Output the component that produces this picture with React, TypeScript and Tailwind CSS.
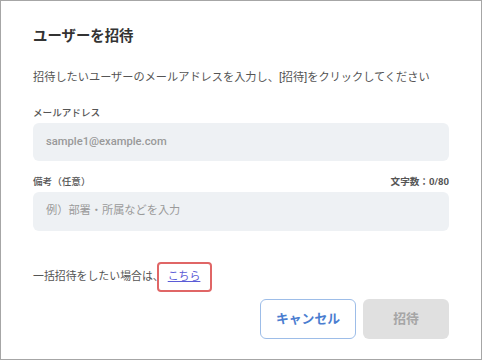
const font = {
  fontFamily: 'Roboto, "Noto Sans CJK JP", sans-serif',
};

export default function App() {
  return (
    <div
      className="w-[482px] h-[360px] border border-[#a6a6a6] bg-white px-8 pt-[25px] flex flex-col text-[#444]"
      style={font}
    >
      <h2 className="text-[14.4px] font-bold leading-[22px] text-[#333]">ユーザーを招待</h2>

      <p className="mt-[21px] text-[11.2px] leading-[17px] text-[#555]">
        招待したいユーザーのメールアドレスを入力し、[招待]をクリックしてください
      </p>

      {/* Email */}
      <label className="mt-[20px] text-[9.6px] leading-[14px] font-medium text-[#555]">メールアドレス</label>
      <div className="mt-[3px] h-[38px] rounded-[6px] bg-[#eef1f4] px-[13px] flex items-center text-[11.2px] font-medium text-[#999]">
        sample1@example.com
      </div>

      {/* Note */}
      <div className="mt-[14px] flex justify-between text-[9.6px] leading-[14px] font-medium text-[#555]">
        <span>備考（任意）</span>
        <span className="font-bold">文字数：0/80</span>
      </div>
      <div className="mt-[3px] h-[39px] rounded-[6px] bg-[#eef1f4] px-[13px] flex items-center text-[11.2px] text-[#9a9a9a]">
        例）部署・所属などを入力
      </div>

      {/* Bulk invite link */}
      <div className="mt-[31px] h-[30px] flex items-center text-[10.9px] text-[#555]">
        <span>一括招待をしたい場合は、</span>
        <span className="ml-[-7px] h-[30px] flex items-center pl-[9px] pr-[10px] border-2 border-[#e06666] rounded-[4px]">
          <a className="text-[#5b5bd6] underline">こちら</a>
        </span>
      </div>

      {/* Actions */}
      <div className="mt-[7px] flex justify-end gap-[7px]">
        <button className="w-[96px] h-[40px] rounded-[6px] border border-[#9dbde8] bg-white text-[12.8px] font-bold text-[#4a7dd0]">
          キャンセル
        </button>
        <button className="w-[86px] h-[40px] rounded-[6px] bg-[#e0e0e0] text-[12.8px] font-bold text-[#a6a6a6]">
          招待
        </button>
      </div>
    </div>
  );
}
